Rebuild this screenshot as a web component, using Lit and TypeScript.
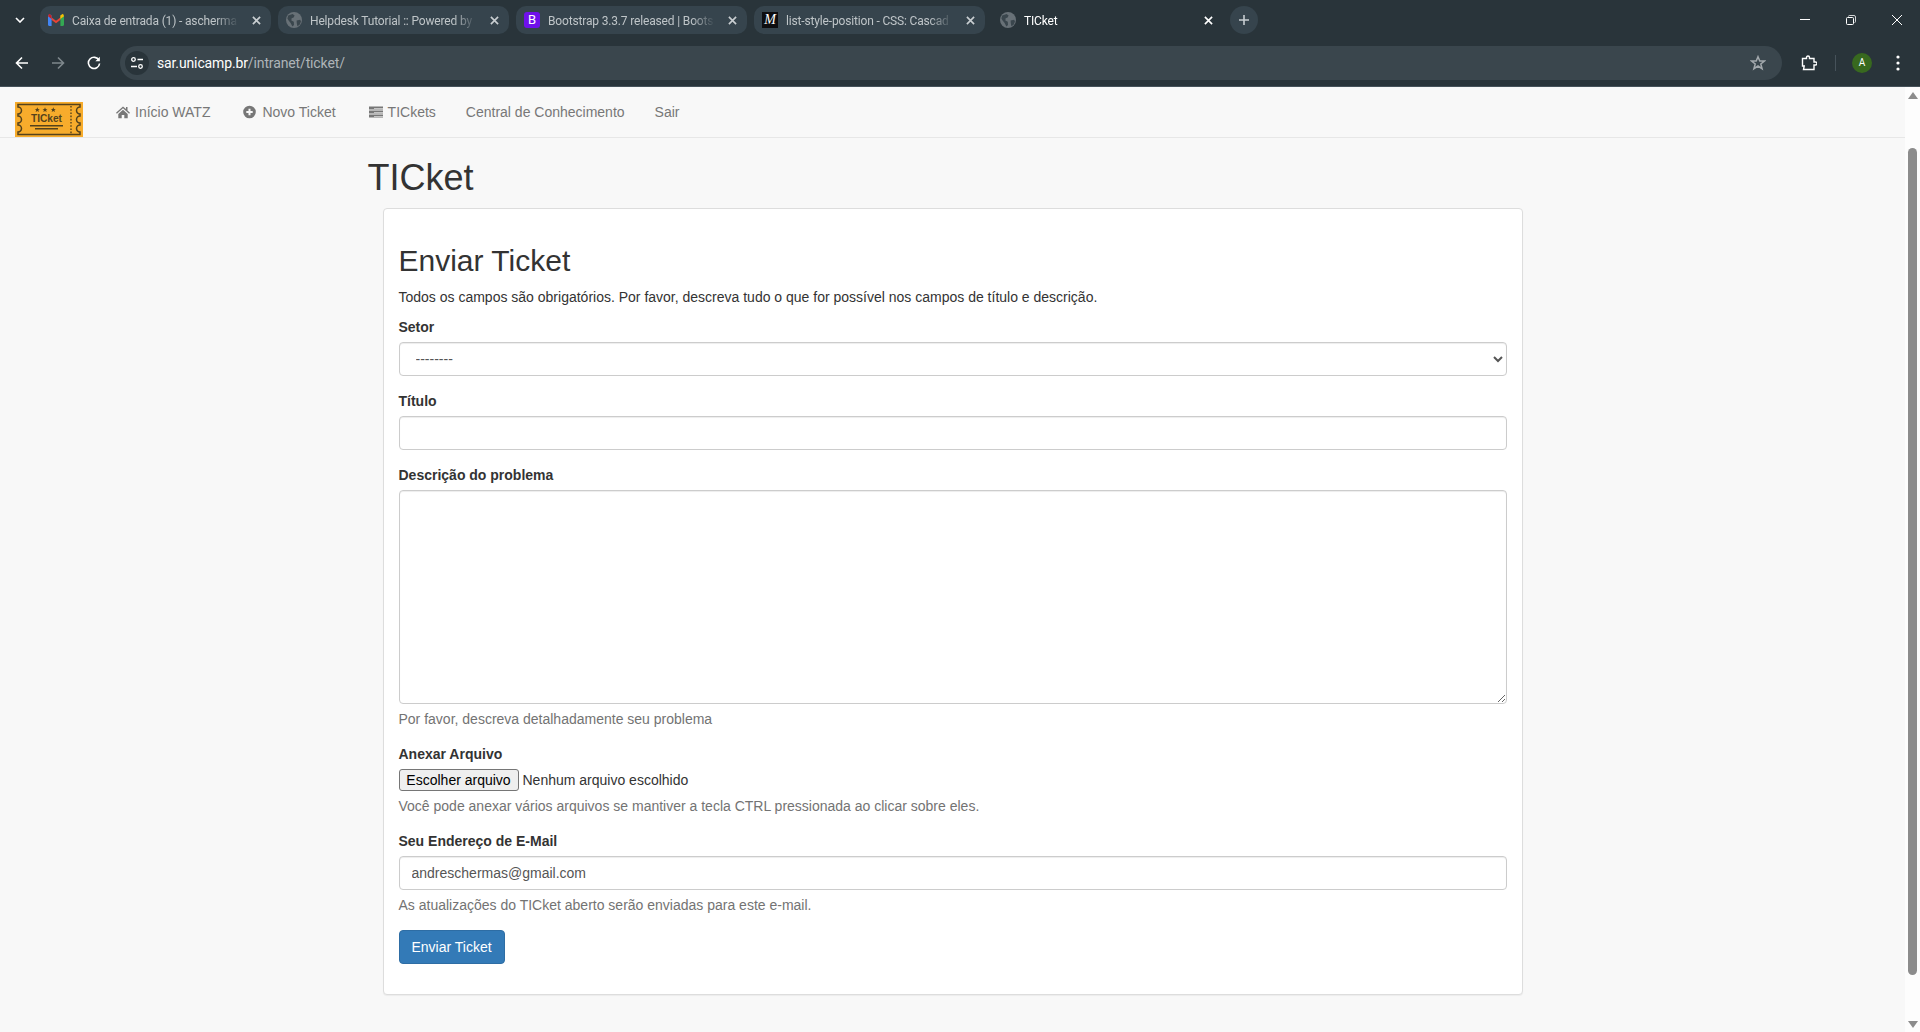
import { LitElement, css, html, svg } from 'lit'
import { customElement } from 'lit/decorators.js'

const globe = html`<svg class="fav" viewBox="0 0 16 16">
  <circle cx="8" cy="8" r="8" fill="#687177" />
  <path d="M2.2 3.600 6.600 2l2 1.400-1 2.200-2 .6-.2 2.200 2.400 1.400.2 3.200-1.600 1.600L4.600 11 2.600 8.600 1.400 6.600zM10.600 8.400l3.600-.6.8 1.800-1.400 3.200-2.200 1.400-.6-3z" fill="#3a464d" />
</svg>`

const gmail = html`<svg class="fav" viewBox="0 0 16 16">
  <path d="M1 3.600 8 8.800 15 3.600V6L8 11.200 1 6z" fill="#ea4335" />
  <path d="M0 4.200C0 2.600 1.600 2 2.600 2.800L3.600 3.600V14H1.200C.5 14 0 13.500 0 12.800z" fill="#4285f4" />
  <path d="M16 4.200C16 2.600 14.400 2 13.400 2.800L12.400 3.600V14h2.400c.7 0 1.200-.5 1.200-1.200z" fill="#34a853" />
  <path d="M12.400 3.600 15 1.800 16 4.200 12.400 7z" fill="#fbbc04" />
  <path d="M3.600 3.600 1 1.800 0 4.200 3.600 7z" fill="#c5221f" />
</svg>`

const bootstrap = html`<span class="fav boot">B</span>`
const mdn = html`<span class="fav mdn">M</span>`

interface Tab {
  title: string
  icon: unknown
  active?: boolean
}

const tabs: Tab[] = [
  { title: 'Caixa de entrada (1) - ascherma', icon: gmail },
  { title: 'Helpdesk Tutorial :: Powered by', icon: globe },
  { title: 'Bootstrap 3.3.7 released | Boots', icon: bootstrap },
  { title: 'list-style-position - CSS: Cascad', icon: mdn },
  { title: 'TICket', icon: globe, active: true },
]

const closeIcon = html`<svg class="close" viewBox="0 0 10 10">
  <path d="M1 1l8 8M9 1l-8 8" fill="none" stroke="currentColor" stroke-width="1.800" />
</svg>`

// scalloped line of the ticket logo, three notches on each side
const ticketOutline = svg`<path d="M3 2.500H65V5a3.500 3.500 0 0 0 0 7V14a3.500 3.500 0 0 0 0 7V23a3.500 3.500 0 0 0 0 7V32.500H3V30a3.500 3.500 0 0 0 0 -7V21a3.500 3.500 0 0 0 0 -7V12a3.500 3.500 0 0 0 0 -7z" fill="none" stroke="#54421c" stroke-width="1.500" />`

const star = (x: number) =>
  svg`<path transform="translate(${x} 7.700)" d="M0-2.500.7-.8 2.500-.7 1.100.4 1.600 2.200 0 1.200-1.600 2.200-1.100.4-2.500-.7-.7-.8z" />`

@customElement('app-root')
export class AppRoot extends LitElement {
  private renderChrome() {
    return html`
      <div class="strip">
        <svg class="tab-search" viewBox="0 0 10 6">
          <path d="M1 1l4 4 4-4" fill="none" stroke="#fff" stroke-width="1.600" />
        </svg>
        <div class="tabs">
          ${tabs.map(
            (tab) => html`
              <div class="tab ${tab.active ? 'active' : ''}">
                ${tab.icon}
                <span class="tab-title">${tab.title}</span>
                ${closeIcon}
              </div>
            `
          )}
          <div class="new-tab">
            <svg viewBox="0 0 12 12" width="12" height="12">
              <path d="M6 1v10M1 6h10" stroke="#c7cdd1" stroke-width="1.600" />
            </svg>
          </div>
        </div>
        <div class="window-controls">
          <svg viewBox="0 0 10 10"><path d="M0 4.500h10" stroke="#fff" stroke-width="1" /></svg>
          <svg viewBox="0 0 10 10">
            <rect x=".5" y="2.500" width="7" height="7" rx="1" fill="none" stroke="#fff" />
            <path d="M2.500 1.500q0-1 1-1h4.500q1.500 0 1.500 1.500v4.500q0 1-1 1" fill="none" stroke="#fff" stroke-width=".8" />
          </svg>
          <svg viewBox="0 0 10 10"><path d="M0 0l10 10M10 0L0 10" stroke="#fff" stroke-width="1" /></svg>
        </div>
      </div>
      <div class="toolbar">
        <svg class="nav-btn" viewBox="0 0 14 14">
          <path d="M13 7H2M7 1.500 1.500 7 7 12.500" fill="none" stroke="#fff" stroke-width="1.600" />
        </svg>
        <svg class="nav-btn" viewBox="0 0 14 14">
          <path d="M1 7h11M7 1.500 12.500 7 7 12.500" fill="none" stroke="#7e878c" stroke-width="1.600" />
        </svg>
        <svg class="nav-btn" viewBox="0 0 14 14">
          <path d="M12 4.300A5.600 5.600 0 1 0 12.600 7.500" fill="none" stroke="#fff" stroke-width="1.600" />
          <path d="M12.800 .8V5.200H8.400z" fill="#fff" />
        </svg>
        <div class="omnibox">
          <span class="site-info">
            <svg viewBox="0 0 14 14" width="14" height="14">
              <circle cx="3.500" cy="3.500" r="1.800" fill="none" stroke="#fff" stroke-width="1.300" />
              <path d="M7.500 3.500H13M1 10.500h6" stroke="#fff" stroke-width="1.300" />
              <circle cx="10.500" cy="10.500" r="1.800" fill="none" stroke="#fff" stroke-width="1.300" />
            </svg>
          </span>
          <span class="url"><b>sar.unicamp.br</b>/intranet/ticket/</span>
          <svg class="star" viewBox="0 0 16 16">
            <path d="M8 1.700 9.800 6h4.700l-3.700 3 1.300 4.700L8 11l-4.100 2.700L5.200 9 1.500 6h4.700z" fill="none" stroke="#a3a9ad" stroke-width="1.500" />
          </svg>
        </div>
        <svg class="extensions" viewBox="0 0 16 16">
          <path d="M1.500 3.500H5.500V2.500Q5.500 1 7 1T8.500 2.500V3.500H13V7H14.500Q16 7 16 8.500T14.500 10H13V14.500H2.500L3.200 11 1.500 11z" fill="none" stroke="#fff" stroke-width="1.400" />
        </svg>
        <span class="divider"></span>
        <span class="avatar">A</span>
        <svg class="menu" viewBox="0 0 4 16">
          <circle cx="2" cy="2" r="1.600" fill="#fff" />
          <circle cx="2" cy="8" r="1.600" fill="#fff" />
          <circle cx="2" cy="14" r="1.600" fill="#fff" />
        </svg>
      </div>
    `
  }

  private renderNavbar() {
    return html`
      <nav class="navbar">
        <svg class="logo" viewBox="0 0 68 35" role="img">
          <rect width="68" height="35" fill="#f7ac2c" />
          ${ticketOutline}
          <path d="M56 4v28" stroke="#54421c" stroke-width="1.400" stroke-dasharray="1.600 1.600" />
          <g fill="#54421c">${star(22.300)}${star(30)}${star(38.300)}</g>
          <text x="31.500" y="20" text-anchor="middle" textLength="31" lengthAdjust="spacingAndGlyphs" class="logo-text">TICket</text>
          <path d="M15 23.700h33M20 26.800h23" stroke="#54421c" stroke-width="1.400" />
        </svg>
        <ul class="nav-links">
          <li class="spaced">
            <svg class="glyph" viewBox="0 0 14 14">
              <path d="M7 1.500 0 7.800l.9 1L7 3.300l6.100 5.500.9-1-2.500-2.300V2H10v2.100z" />
              <path d="M2.300 9 7 4.800 11.700 9v4.300H8.300V10H5.700v3.300H2.300z" />
            </svg>
            Início WATZ
          </li>
          <li class="spaced">
            <svg class="glyph" viewBox="0 0 14 14">
              <path fill-rule="evenodd" d="M6.500.7a6.300 6.300 0 1 1 0 12.600A6.300 6.300 0 0 1 6.500.7zM5.500 3.800V6h-2.200v2h2.200v2.200h2V8h2.200V6H7.500V3.800z" />
            </svg>
            Novo Ticket
          </li>
          <li>
            <svg class="glyph" viewBox="0 0 14 14">
              <path d="M0 1.500h14v3H0zM0 5.500h14v3H0zM0 9.500h14v3H0z" />
              <path d="M5 3.500h9M5 7.500h9M5 11.500h9" stroke="#f8f8f8" stroke-width=".6" />
            </svg>
            TICkets
          </li>
          <li>Central de Conhecimento</li>
          <li>Sair</li>
        </ul>
      </nav>
    `
  }

  private renderForm() {
    return html`
      <form class="panel" @submit=${(e: Event) => e.preventDefault()}>
        <h2>Enviar Ticket</h2>
        <p class="lead">Todos os campos são obrigatórios. Por favor, descreva tudo o que for possível nos campos de título e descrição.</p>
        <div class="form-group">
          <label>Setor</label>
          <select class="form-control"><option>--------</option></select>
        </div>
        <div class="form-group">
          <label>Título</label>
          <input class="form-control" type="text" />
        </div>
        <div class="form-group">
          <label>Descrição do problema</label>
          <textarea class="form-control" rows="10"></textarea>
          <small class="help">Por favor, descreva detalhadamente seu problema</small>
        </div>
        <div class="form-group">
          <label>Anexar Arquivo</label>
          <div class="file-row">
            <button class="file-btn" type="button">Escolher arquivo</button>
            <span>Nenhum arquivo escolhido</span>
          </div>
          <small class="help">Você pode anexar vários arquivos se mantiver a tecla CTRL pressionada ao clicar sobre eles.</small>
        </div>
        <div class="form-group">
          <label>Seu Endereço de E-Mail</label>
          <input class="form-control" type="email" value="andreschermas@gmail.com" />
          <small class="help">As atualizações do TICket aberto serão enviadas para este e-mail.</small>
        </div>
        <button class="btn-primary" type="submit">Enviar Ticket</button>
      </form>
    `
  }

  render() {
    return html`
      <header class="chrome">${this.renderChrome()}</header>
      <div class="viewport">
        <main class="page">
          ${this.renderNavbar()}
          <div class="container">
            <h1>TICket</h1>
            <div class="card-wrap">${this.renderForm()}</div>
          </div>
        </main>
        <div class="scrollbar">
          <span class="arrow up"></span>
          <span class="thumb"></span>
          <span class="arrow down"></span>
        </div>
      </div>
    `
  }

  static styles = css`
    :host {
      display: flex;
      flex-direction: column;
      height: 1032px;
      overflow: hidden;
      font-family: 'Liberation Sans', Arial, sans-serif;
      font-size: 14px;
      line-height: 20px;
      color: #333;
    }

    * {
      box-sizing: border-box;
    }

    /* browser frame */
    .chrome {
      flex: none;
      height: 87px;
      background: #29343a;
      border-bottom: 1px solid #46525a;
      font-family: Roboto, 'Liberation Sans', sans-serif;
    }

    .strip {
      height: 46px;
      display: flex;
      align-items: flex-start;
    }

    .tab-search {
      flex: none;
      width: 10px;
      height: 6px;
      margin: 17px 15px 0;
    }

    .tabs {
      display: flex;
      gap: 7px;
      padding-top: 6px;
    }

    .tab {
      width: 231px;
      height: 28px;
      display: flex;
      align-items: center;
      padding: 0 10px 0 8px;
      border-radius: 10px;
      background: #36444d;
      color: #bfc5c8;
      font-size: 12px;
    }

    .tab.active {
      background: transparent;
      color: #fff;
    }

    .fav {
      flex: none;
      width: 16px;
      height: 16px;
    }

    .boot {
      display: flex;
      align-items: center;
      justify-content: center;
      border-radius: 3px;
      background: #6f10ea;
      color: #fff;
      font: 13px/16px Roboto, sans-serif;
    }

    .mdn {
      display: flex;
      align-items: center;
      justify-content: center;
      background: #0d0d10;
      color: #fff;
      font: italic 14px/16px 'Liberation Serif', serif;
    }

    .tab-title {
      flex: 1;
      min-width: 0;
      margin-left: 8px;
      padding-top: 2px;
      white-space: nowrap;
      overflow: hidden;
      letter-spacing: -0.16px;
      -webkit-mask-image: linear-gradient(90deg, #000 86%, transparent 100%);
      mask-image: linear-gradient(90deg, #000 86%, transparent 100%);
    }

    .close {
      flex: none;
      width: 9px;
      height: 9px;
      margin-left: 13px;
      color: #c9ced1;
    }

    .tab.active .close {
      color: #fff;
    }

    .new-tab {
      width: 28px;
      height: 28px;
      border-radius: 50%;
      background: #36444d;
      display: flex;
      align-items: center;
      justify-content: center;
    }

    .window-controls {
      margin-left: auto;
      display: flex;
      gap: 36px;
      padding: 15px 18px 0 0;
    }

    .window-controls svg {
      width: 10px;
      height: 10px;
    }

    .toolbar {
      height: 40px;
      display: flex;
      align-items: flex-start;
      padding-left: 15px;
    }

    .nav-btn {
      flex: none;
      width: 14px;
      height: 14px;
      margin: 10px 22px 0 0;
    }

    .omnibox {
      flex: none;
      width: 1662px;
      height: 34px;
      margin-left: -3px;
      display: flex;
      align-items: center;
      padding: 0 16px 0 5px;
      border-radius: 17px;
      background: #3a464d;
    }

    .site-info {
      flex: none;
      width: 24px;
      height: 24px;
      border-radius: 50%;
      background: #29343a;
      display: flex;
      align-items: center;
      justify-content: center;
    }

    .url {
      margin-left: 8px;
      color: #aeb4b8;
      font-size: 14px;
      letter-spacing: -0.13px;
    }

    .url b {
      font-weight: 400;
      color: #fff;
    }

    .star {
      margin-left: auto;
      width: 16px;
      height: 16px;
    }

    .extensions {
      flex: none;
      width: 16px;
      height: 16px;
      margin: 9px 0 0 19px;
    }

    .divider {
      flex: none;
      width: 1px;
      height: 16px;
      margin: 9px 0 0 18px;
      background: #46525a;
    }

    .avatar {
      flex: none;
      width: 20px;
      height: 20px;
      margin: 7px 0 0 16px;
      border-radius: 50%;
      background: #38691f;
      color: #fff;
      font-size: 10px;
      line-height: 20px;
      text-align: center;
    }

    .menu {
      flex: none;
      width: 4px;
      height: 16px;
      margin: 9px 0 0 24px;
    }

    /* page */
    .viewport {
      flex: 1;
      min-height: 0;
      display: flex;
    }

    .page {
      flex: 1;
      min-width: 0;
      background: #f8f8f8;
    }

    .navbar {
      height: 51px;
      display: flex;
      align-items: flex-end;
      border-bottom: 1px solid #e7e7e7;
    }

    .logo {
      flex: none;
      width: 68px;
      height: 35px;
      margin: 0 3px 0 15px;
    }

    .logo-text {
      font: 700 11.500px 'Liberation Sans', sans-serif;
      fill: #54421c;
    }

    .nav-links {
      list-style: none;
      display: flex;
      margin: 0;
      padding: 0 0 0 15px;
      height: 50px;
    }

    .nav-links li {
      display: flex;
      align-items: center;
      gap: 5px;
      padding: 0 15px;
      color: #777;
    }

    .nav-links li.spaced {
      margin-right: 3px;
    }

    .glyph {
      width: 14px;
      height: 14px;
      fill: #777;
    }

    .container {
      width: 1170px;
      margin: 0 auto;
    }

    h1 {
      margin: 20px 0 10px;
      font-size: 36px;
      font-weight: 500;
      line-height: 1.1;
    }

    .card-wrap {
      padding: 0 15px;
    }

    .panel {
      display: block;
      height: 787px;
      padding: 15px;
      background: #fff;
      border: 1px solid #ddd;
      border-radius: 4px;
      box-shadow: 0 1px 1px rgba(0, 0, 0, 0.05);
    }

    h2 {
      margin: 20px 0 10px;
      font-size: 30px;
      font-weight: 500;
      line-height: 1.1;
    }

    .lead {
      margin: 0 0 10px;
    }

    .form-group {
      margin-bottom: 15px;
    }

    label {
      display: block;
      margin-bottom: 5px;
      font-weight: 700;
    }

    .form-control {
      display: block;
      width: 100%;
      height: 34px;
      padding: 6px 12px;
      font: 14px/20px 'Liberation Sans', Arial, sans-serif;
      color: #555;
      background: #fff;
      border: 1px solid #ccc;
      border-radius: 4px;
      box-shadow: inset 0 1px 1px rgba(0, 0, 0, 0.075);
      outline: none;
    }

    textarea.form-control {
      height: 214px;
      resize: vertical;
    }

    .help {
      display: block;
      margin-top: 5px;
      font-size: 14px;
      color: #737373;
    }

    .file-row {
      display: flex;
      align-items: center;
      height: 22px;
      gap: 4px;
    }

    .file-btn {
      width: 120px;
      height: 22px;
      padding: 0;
      font: 14px 'Liberation Sans', Arial, sans-serif;
      color: #000;
      background: #efefef;
      border: 1px solid #767676;
      border-radius: 3px;
    }

    .btn-primary {
      height: 34px;
      width: 106px;
      padding: 0;
      font: 14px 'Liberation Sans', Arial, sans-serif;
      color: #fff;
      background: #337ab7;
      border: 1px solid #2e6da4;
      border-radius: 4px;
    }

    /* fake scrollbar */
    .scrollbar {
      flex: none;
      width: 15px;
      display: flex;
      flex-direction: column;
      align-items: center;
      padding: 5px 0 4px;
      background: #fdfdfd;
    }

    .arrow {
      flex: none;
      width: 0;
      height: 0;
      border-left: 5px solid transparent;
      border-right: 5px solid transparent;
    }

    .arrow.up {
      border-bottom: 7px solid #8c8c8c;
    }

    .arrow.down {
      border-top: 7px solid #8c8c8c;
    }

    .thumb {
      width: 9px;
      height: 827px;
      margin: 49px 0 46px;
      border-radius: 5px;
      background: #8c8c8c;
    }
  `
}

declare global {
  interface HTMLElementTagNameMap {
    'app-root': AppRoot
  }
}
